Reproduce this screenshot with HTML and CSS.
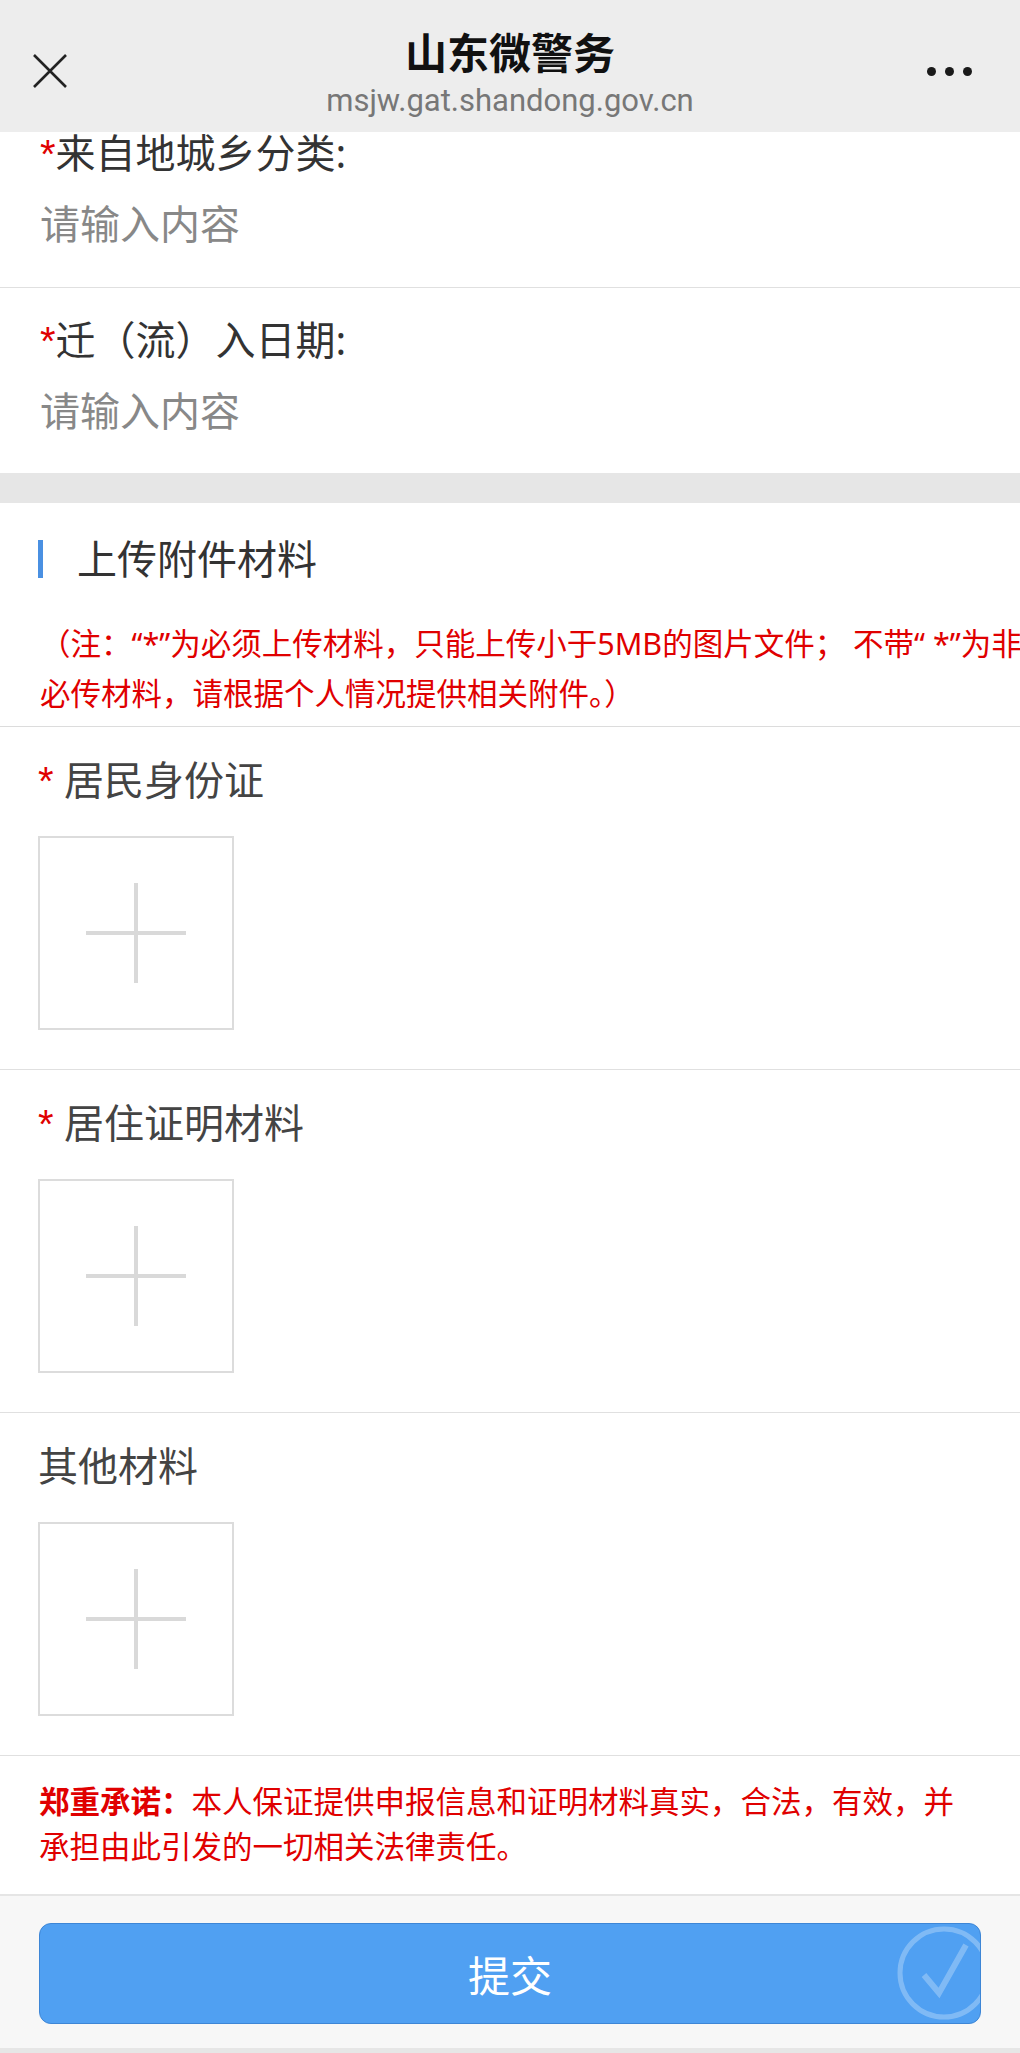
FILE: index.html
```html
<!DOCTYPE html>
<html lang="zh-CN">
<head>
    <meta charset="UTF-8">
    <title>山东微警务</title>
    <link rel="stylesheet" href="styles.css">
</head>
<body>
    <div class="topbar">
        <div class="topbar-close">
            <svg width="36" height="36" viewBox="0 0 36 36">
                <path d="M2 2 L34 34 M34 2 L2 34" stroke="#222" stroke-width="2.6" fill="none" />
            </svg>
        </div>
        <div class="topbar-title">
            <h1>山东微警务</h1>
            <p>msjw.gat.shandong.gov.cn</p>
        </div>
        <div class="topbar-more">
            <span></span><span></span><span></span>
        </div>
    </div>

    <div class="form">
        <div class="field field-cut">
            <label for="from-type"><i>*</i>来自地城乡分类:</label>
            <input type="text" id="from-type" class="text-field" placeholder="请输入内容" />
        </div>
        <div class="field field-last">
            <label for="move-date"><i>*</i>迁（流）入日期:</label>
            <input type="text" id="move-date" class="text-field" placeholder="请输入内容" />
        </div>
    </div>

    <div class="gap"></div>

    <div class="upload-head">
        <h3>上传附件材料</h3>
        <p class="note">（注：“*”为必须上传材料，只能上传小于5MB的图片文件； 不带“ *”为非<br>必传材料，请根据个人情况提供相关附件。）</p>
    </div>

    <div class="upload">
        <div class="upload-label"><i>*</i> 居民身份证</div>
        <div class="upload-box">
            <svg width="100" height="100" viewBox="0 0 100 100">
                <rect x="0" y="48" width="100" height="4" fill="#d9d9d9" />
                <rect x="48" y="0" width="4" height="100" fill="#d9d9d9" />
            </svg>
        </div>
    </div>
    <div class="upload">
        <div class="upload-label"><i>*</i> 居住证明材料</div>
        <div class="upload-box">
            <svg width="100" height="100" viewBox="0 0 100 100">
                <rect x="0" y="48" width="100" height="4" fill="#d9d9d9" />
                <rect x="48" y="0" width="4" height="100" fill="#d9d9d9" />
            </svg>
        </div>
    </div>
    <div class="upload">
        <div class="upload-label">其他材料</div>
        <div class="upload-box">
            <svg width="100" height="100" viewBox="0 0 100 100">
                <rect x="0" y="48" width="100" height="4" fill="#d9d9d9" />
                <rect x="48" y="0" width="4" height="100" fill="#d9d9d9" />
            </svg>
        </div>
    </div>

    <div class="promise">
        <p><b>郑重承诺：</b>本人保证提供申报信息和证明材料真实，合法，有效，并承担由此引发的一切相关法律责任。</p>
    </div>

    <div class="footer">
        <button class="button">提交
            <svg class="button-mark" width="100" height="100" viewBox="0 0 100 100">
                <circle cx="50" cy="50" r="44" stroke="rgba(255,255,255,0.28)" stroke-width="5" fill="none" />
                <path d="M30 52 L45 70 L72 22" stroke="rgba(255,255,255,0.28)" stroke-width="6" fill="none" />
            </svg>
        </button>
    </div>
</body>
</html>
```

FILE: styles.css
```css
html, body {
    margin: 0;
    padding: 0;
}
body {
    background-color: #e6e6e6;
    font-family: "Noto Sans", "Noto Sans CJK SC", sans-serif;
    color: #333;
    overflow: hidden;
}
i {
    font-style: normal;
    font-family: "Liberation Sans", sans-serif;
    line-height: 1;
    color: #e00000;
}

.topbar {
    position: relative;
    z-index: 2;
    height: 132px;
    box-sizing: border-box;
    padding-top: 14px;
    background-color: #ededed;
    display: grid;
    grid-template-columns: 100px 1fr 100px;
    align-items: center;
}
.topbar-close {
    margin-left: 32px;
    height: 36px;
    margin-top: -4px;
}
.topbar-title {
    text-align: center;
}
.topbar-title h1 {
    margin: 0;
    font-size: 42px;
    line-height: 50px;
    font-weight: bold;
    color: #111;
    font-family: "Noto Sans CJK SC", sans-serif;
}
.topbar-title p {
    margin: 5px 0 0 0;
    font-family: Roboto, "Liberation Sans", sans-serif;
    font-size: 31px;
    line-height: 40px;
    color: #777;
}
.topbar-more {
    display: flex;
    gap: 9px;
    margin-top: -4px;
    margin-left: 7px;
}
.topbar-more span {
    width: 9px;
    height: 9px;
    border-radius: 50%;
    background-color: #1a1a1a;
}

.form {
    background-color: #fff;
}
.field {
    padding: 24px 40px 36px 40px;
    border-bottom: 1px solid #e0e0e0;
    background-color: #fff;
}
.field-cut {
    margin-top: -7px;
    padding-top: 0;
    padding-bottom: 37px;
}
.field-last {
    border-bottom: none;
}
.field label {
    display: block;
    font-size: 40px;
    line-height: 56px;
    color: #333;
}
.text-field {
    display: block;
    width: 100%;
    margin-top: 13px;
    height: 56px;
    padding: 0;
    border: none;
    outline: none;
    font-family: "Noto Sans CJK SC", sans-serif;
    font-size: 40px;
    color: #333;
    background: transparent;
}
.text-field::placeholder {
    color: #888;
}

.gap {
    height: 30px;
    background-color: #e6e6e6;
}

.upload-head {
    background-color: #fff;
    padding: 28px 0 8px 38px;
    border-bottom: 1px solid #dcdcdc;
}
.upload-head h3 {
    margin: 0;
    font-size: 40px;
    line-height: 56px;
    font-weight: normal;
    color: #333;
    display: flex;
    align-items: center;
}
.upload-head h3::before {
    content: "";
    width: 5px;
    height: 38px;
    background-color: #4a90e2;
    margin-right: 34px;
}
.note {
    margin: 31px 0 0 2px;
    font-size: 30.5px;
    line-height: 50px;
    color: #e00000;
    white-space: nowrap;
}

.upload {
    background-color: #fff;
    padding: 25px 40px 39px 38px;
    border-bottom: 1px solid #e0e0e0;
}
.upload-label {
    font-size: 40px;
    line-height: 56px;
    color: #444;
}
.upload-box {
    margin-top: 28px;
    width: 192px;
    height: 190px;
    border: 2px solid #dcdcdc;
    display: flex;
    align-items: center;
    justify-content: center;
}

.promise {
    background-color: #fff;
    padding: 23px 40px 25px 39px;
    border-bottom: 2px solid #e5e5e5;
}
.promise p {
    margin: 0;
    font-size: 30.5px;
    line-height: 45px;
    color: #e00000;
}
.promise b {
    font-weight: bold;
}

.footer {
    background-color: #f7f7f7;
    padding: 27px 39px 24px 39px;
}
.button {
    position: relative;
    overflow: hidden;
    display: block;
    width: 100%;
    height: 101px;
    border: 1px solid #3d86d6;
    border-radius: 12px;
    background-color: #50a0f2;
    color: #fff;
    font-family: "Noto Sans CJK SC", sans-serif;
    font-size: 42px;
    padding: 0;
}
.button-mark {
    position: absolute;
    right: -14px;
    top: -1px;
}
```
